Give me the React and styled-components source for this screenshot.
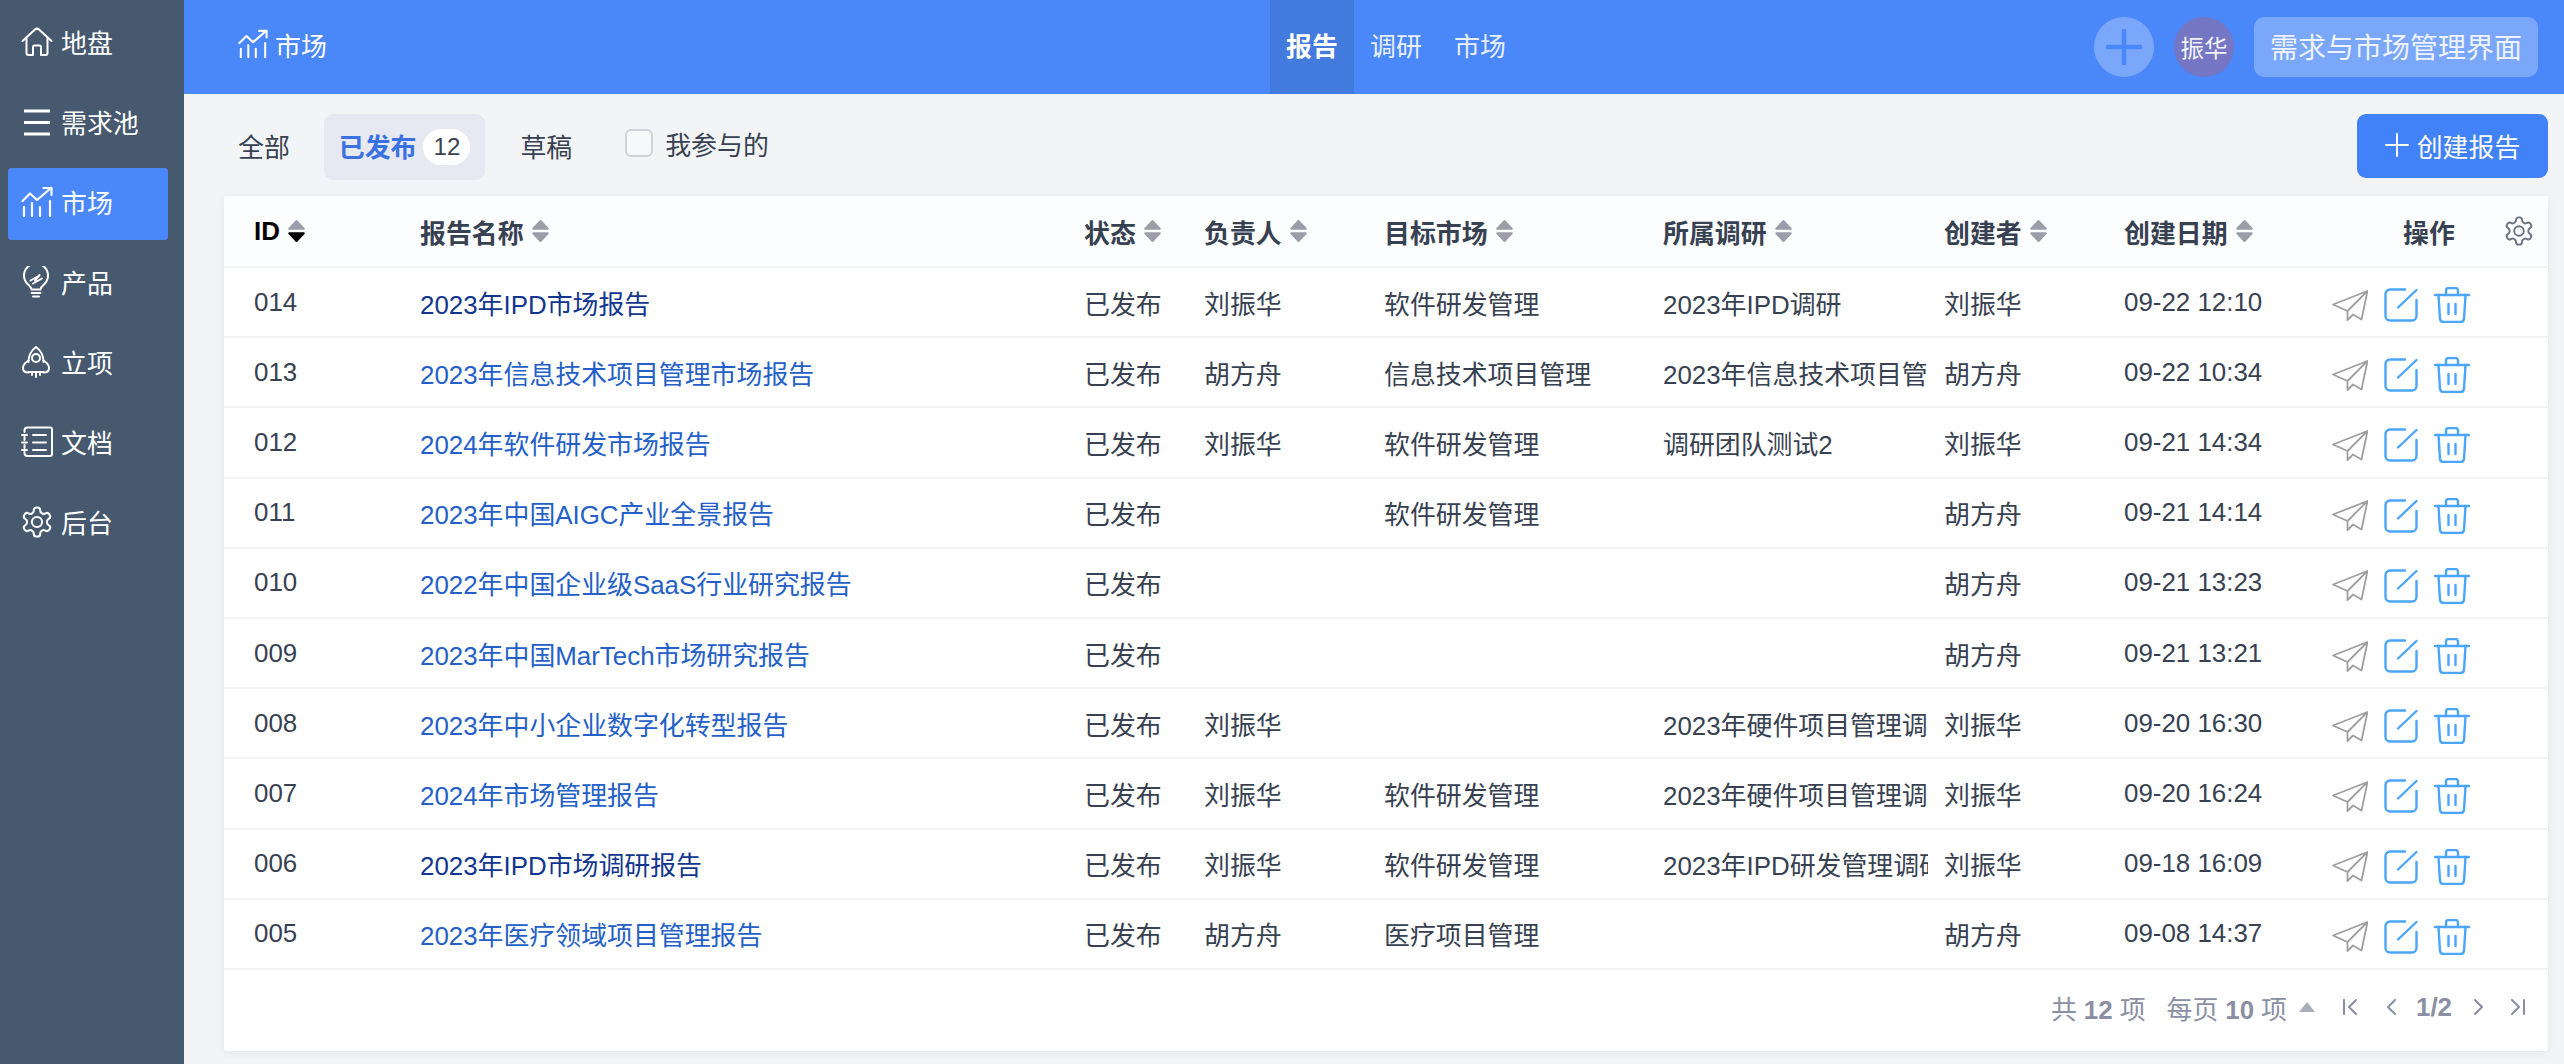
import React from "react";
import styled, { createGlobalStyle } from "styled-components";

const Global = createGlobalStyle`
  * { box-sizing: border-box; }
  html, body { margin: 0; padding: 0; height: 100%; background: #f3f4f6; }
  body { font-family: "Liberation Sans", "Noto Sans CJK SC", sans-serif; font-size: 25.9px; color: #374151; }
`;

const Shell = styled.div`display: flex; height: 1064px; overflow: hidden;`;
const Sidebar = styled.nav`
  width: 184px; flex: none; background: #46596f; padding: 8px 16px 0 8px;
  display: flex; flex-direction: column; gap: 8px;
`;
const NavItem = styled.div`
  height: 72px; display: flex; align-items: center; gap: 8px; padding: 0 0 6px 13px;
  border-radius: 4px; color: #fff; background: ${p => (p.$active ? "#4a87f9" : "transparent")};
  svg { width: 32px; height: 32px; flex: none; position: relative; top: 1px; }
`;
const Main = styled.div`flex: 1; min-width: 0; display: flex; flex-direction: column;`;
const TopBar = styled.header`height: 94px; flex: none; background: #4a87f9; display: flex; align-items: stretch; color: #fff;`;
const Title = styled.div`
  width: 1086px; flex: none; padding: 0 0 6px 54px; display: flex; align-items: center; gap: 7px;
  svg { width: 30px; height: 30px; }
`;
const TopNav = styled.div`display: flex; flex: 1;`;
const TopTab = styled.div`
  width: 84px; display: flex; align-items: center; justify-content: center; padding-bottom: 6px;
  background: ${p => (p.$active ? "#437add" : "transparent")};
  font-weight: ${p => (p.$active ? 700 : 400)};
  color: ${p => (p.$active ? "#fff" : "#e8effe")};
`;
const TopActions = styled.div`display: flex; align-items: center; gap: 20px; padding: 0 26px 0 0;`;
const RoundPlus = styled.div`
  width: 60px; height: 60px; border-radius: 50%; background: #7ba7fb; display: flex; align-items: center; justify-content: center;
  svg { width: 36px; height: 36px; }
`;
const Avatar = styled.div`
  width: 60px; height: 60px; border-radius: 50%; background: #7576c4; display: flex; align-items: center; justify-content: center;
  font-size: 23.500px; color: #f2f3fc;
`;
const WorkspaceButton = styled.div`
  width: 284px; height: 60px; border-radius: 10px; background: #7ba7fb; display: flex; align-items: center; justify-content: center;
  color: #eef3ff; font-size: 28px; padding-bottom: 2px;
`;
const Content = styled.main`flex: 1; padding: 20px 16px 13px 40px; display: flex; flex-direction: column; gap: 16px; min-height: 0;`;
const FilterBar = styled.div`display: flex; align-items: flex-start; height: 66px;`;
const Tab = styled.div`
  height: 66px; padding: 0 15px 4px; display: flex; align-items: center; gap: 7px; border-radius: 9px;
  margin-right: 20px; color: ${p => (p.$active ? "#3a72e3" : "#374151")};
  background: ${p => (p.$active ? "#e6e9f2" : "transparent")};
  font-weight: ${p => (p.$active ? 600 : 400)};
  &:first-child { margin-left: -1px; margin-right: 19px; }
`;
const Badge = styled.span`
  width: 47px; height: 36px; border-radius: 18px; background: #fff; color: #374151; font-size: 24px; font-weight: 400;
  display: flex; align-items: center; justify-content: center; position: relative; top: 2px;
`;
const Mine = styled.label`display: flex; align-items: center; gap: 12px; margin-left: 18px; height: 58px; color: #374151;`;
const Checkbox = styled.span`width: 28px; height: 28px; border: 2px solid #cfd2d8; border-radius: 6px; background: #f7f8f9;`;
const CreateButton = styled.button`
  margin-left: auto; width: 191px; height: 64px; border: 0; border-radius: 9px; background: #4282f8; color: #fff;
  font: inherit; display: flex; align-items: center; justify-content: center; gap: 8px; padding: 0 0 2px;
  svg { width: 24px; height: 24px; }
`;
const Card = styled.section`
  flex: 1; background: #fff; border-radius: 3px; box-shadow: 0 2px 8px rgba(30, 40, 70, 0.07);
  display: flex; flex-direction: column; min-height: 0;
`;
const COLS = "166px 664px 120px 180px 279px 281px 180px 208px 1fr";
const HeadRow = styled.div`
  height: 72px; flex: none; display: grid; grid-template-columns: ${COLS}; padding-left: 30px; align-items: center;
  background: #fcfdfe; border-bottom: 2px solid #f3f4f6; font-weight: 600;
`;
const HeadCell = styled.div`
  display: flex; align-items: center; gap: 8px; white-space: nowrap; color: ${p => (p.$dark ? "#000" : "#374151")};
  svg { width: 17px; height: 24px; flex: none; }
`;
const OpsHead = styled.div`
  display: flex; align-items: center; gap: 49px; padding-left: 71px; white-space: nowrap;
  svg { width: 30px; height: 30px; flex: none; color: #6b7280; }
`;
const Row = styled.div`
  height: 70.2px; flex: none; display: grid; grid-template-columns: ${COLS}; padding-left: 30px; align-items: center;
  border-bottom: 2px solid #f3f4f6;
`;
const Cell = styled.div`overflow: hidden; white-space: nowrap; margin-right: 16px;`;
const NameLink = styled.a`
  color: ${p => (p.$visited ? "#12368f" : "#2460c8")}; text-decoration: none; white-space: nowrap;
`;
const Ops = styled.div`
  display: flex; align-items: center; gap: 16px; position: relative; top: 3px;
`;
const Footer = styled.footer`
  flex: 1; display: flex; align-items: center; justify-content: flex-end; padding: 0 22px 6px 0; color: #8a8fa3;
`;
const PageText = styled.span`display: inline-flex; align-items: baseline; gap: 7px; margin-right: ${p => p.$mr || 0}px;`;
const Strong = styled.b`font-weight: 700;`;
const PagerBtn = styled.span`
  display: flex; align-items: center; justify-content: center; margin-left: ${p => p.$ml || 0}px;
  svg { display: block; }
`;

const Home = () => (
  <svg viewBox="0 0 32 32" fill="none" stroke="currentColor" strokeWidth="2" strokeLinejoin="round" strokeLinecap="round">
    <path d="M1.500 15 14 3.500a3 3 0 0 1 4 0L30.500 15" />
    <path d="M5.500 12.500V27a2 2 0 0 0 2 2H12v-8a1.500 1.500 0 0 1 1.500-1.500h5A1.500 1.500 0 0 1 20 21v8h4.500a2 2 0 0 0 2-2V12.500" />
  </svg>
);
const Menu = () => (
  <svg viewBox="0 0 32 32" fill="none" stroke="currentColor" strokeWidth="3">
    <path d="M3 5h26M3 16.500h26M3 28h26" />
  </svg>
);
const Chart = ({ w = 2.2 }) => (
  <svg viewBox="0 0 32 32" fill="none" stroke="currentColor" strokeWidth={w} strokeLinecap="round" strokeLinejoin="round">
    <path d="M1.500 15 9 7.500l7 6.500L30 2" />
    <path d="M22.500 2H30.500V9" />
    <path d="M3 21v9M11 17v13M19 21v9M29 15v15" />
  </svg>
);
const Bulb = () => (
  <svg viewBox="0 0 32 32" fill="none" stroke="currentColor" strokeWidth="2" strokeLinecap="round" strokeLinejoin="round">
    <path d="M10.500 23.500C10.500 21 8.500 20 6.500 18A12 12 0 1 1 23.500 18C21.500 20 19.500 21 19.500 23.500Z" />
    <path d="M9.500 14.500 18.500 9.500M12 17.500l9-5M18.500 9l-4.500 5.500" />
    <path d="M10.500 27h9M12 30.500h6" />
  </svg>
);
const Rocket = () => (
  <svg viewBox="0 0 32 32" fill="none" stroke="currentColor" strokeWidth="2" strokeLinecap="round" strokeLinejoin="round">
    <path d="M7.500 16C7.500 8 11.500 3.500 15 1c3.500 2.500 7.500 7 7.500 15" />
    <path d="M7.500 14.500C3.500 17 1.500 20 2 23c.5 3 4 4 6 3h14c2 1 5.500 0 6-3 .5-3-1.500-6-5.500-8.500" />
    <circle cx="15" cy="12" r="4" />
    <path d="M11 26v3M15 26v5M19 26v3" />
  </svg>
);
const Docs = () => (
  <svg viewBox="0 0 32 32" fill="none" stroke="currentColor" strokeWidth="2" strokeLinecap="round" strokeLinejoin="round">
    <path d="M3.500 6V4.500a3 3 0 0 1 3-3H29a2 2 0 0 1 2 2V28a2 2 0 0 1-2 2H6.500a3 3 0 0 1-3-3V26" />
    <path d="M3.500 11v3M3.500 19v3M1 9h5M1 16.500h5M1 24h5" />
    <path d="M12 9h13M12 16.500h13M12 24h13" />
  </svg>
);
const Gear = () => (
  <svg viewBox="1 1 22 22" fill="none" stroke="currentColor" strokeWidth="1.400" strokeLinecap="round" strokeLinejoin="round">
    <path d="M12.220 2h-.44a2 2 0 0 0-2 2v.18a2 2 0 0 1-1 1.730l-.43.250a2 2 0 0 1-2 0l-.15-.080a2 2 0 0 0-2.730.730l-.22.380a2 2 0 0 0 .730 2.730l.150.100a2 2 0 0 1 1 1.720v.510a2 2 0 0 1-1 1.740l-.150.090a2 2 0 0 0-.730 2.730l.220.380a2 2 0 0 0 2.730.730l.150-.080a2 2 0 0 1 2 0l.430.250a2 2 0 0 1 1 1.730V20a2 2 0 0 0 2 2h.44a2 2 0 0 0 2-2v-.18a2 2 0 0 1 1-1.730l.43-.250a2 2 0 0 1 2 0l.150.080a2 2 0 0 0 2.730-.730l.220-.390a2 2 0 0 0-.730-2.730l-.150-.080a2 2 0 0 1-1-1.740v-.500a2 2 0 0 1 1-1.740l.150-.090a2 2 0 0 0 .730-2.730l-.220-.380a2 2 0 0 0-2.730-.730l-.150.080a2 2 0 0 1-2 0l-.430-.250a2 2 0 0 1-1-1.730V4a2 2 0 0 0-2-2z" />
    <circle cx="12" cy="12" r="3.500" />
  </svg>
);
const Plus = ({ color = "currentColor", w = 3 }) => (
  <svg viewBox="0 0 24 24" fill="none" stroke={color} strokeWidth={w} strokeLinecap="round">
    <path d="M12 1v22M1 12h22" />
  </svg>
);
const Sort = ({ down }) => (
  <svg viewBox="0 0 17 24">
    <path d="M7.500 1.500a1.400 1.400 0 0 1 2 0L16.500 9a1 1 0 0 1-.7 1.700H1.200A1 1 0 0 1 .5 9z" fill="#9b9ea8" />
    <path d="M7.500 22.500a1.400 1.400 0 0 0 2 0L16.500 15a1 1 0 0 0-.7-1.700H1.200A1 1 0 0 0 .5 15z" fill={down ? "#000" : "#9b9ea8"} />
  </svg>
);
const Send = () => (
  <svg width="36" height="31" viewBox="0 0 36 31" fill="none" stroke="#9e9e9e" strokeWidth="1.800" strokeLinejoin="round">
    <path d="M35.500 1 1 14.500l14.500 6.500L35.500 1 29.500 29.500 21 24.500l-5.500 5.500v-9" />
  </svg>
);
const Edit = () => (
  <svg width="34" height="34" viewBox="0 0 34 34" fill="none" stroke="#4aa5fb" strokeWidth="2.400" strokeLinecap="round">
    <path d="M21 1.500H6a4.500 4.500 0 0 0-4.500 4.500v22A4.500 4.500 0 0 0 6 32.500h22a4.500 4.500 0 0 0 4.500-4.500V12" />
    <path d="M14 19.500 32.500 2" />
  </svg>
);
const Trash = () => (
  <svg width="36" height="36" viewBox="0 0 36 36" fill="none" stroke="#4aa5fb" strokeWidth="2.400" strokeLinecap="round" strokeLinejoin="round">
    <path d="M1 8h34" />
    <path d="M12 8V3.500A2.500 2.500 0 0 1 14.500 1h7A2.500 2.500 0 0 1 24 3.500V8" />
    <path d="M4.500 8l1.500 24a3.500 3.500 0 0 0 3.500 3h17a3.500 3.500 0 0 0 3.500-3L31.500 8" />
    <path d="M14.500 17v10M21.500 17v10" />
  </svg>
);
const Pager = ({ d, w = 16 }) => (
  <svg width={w} height="22" viewBox={`0 0 ${w} 22`} fill="none" stroke="#8a8fa3" strokeWidth="2.100" strokeLinecap="round" strokeLinejoin="round">
    <path d={d} />
  </svg>
);

const navItems = [
  ["地盘", Home], ["需求池", Menu], ["市场", Chart, true], ["产品", Bulb], ["立项", Rocket], ["文档", Docs], ["后台", Gear],
];
const heads = ["ID", "报告名称", "状态", "负责人", "目标市场", "所属调研", "创建者", "创建日期"];
const rows = [
  ["014", "2023年IPD市场报告", "已发布", "刘振华", "软件研发管理", "2023年IPD调研", "刘振华", "09-22 12:10", true],
  ["013", "2023年信息技术项目管理市场报告", "已发布", "胡方舟", "信息技术项目管理", "2023年信息技术项目管理调研", "胡方舟", "09-22 10:34"],
  ["012", "2024年软件研发市场报告", "已发布", "刘振华", "软件研发管理", "调研团队测试2", "刘振华", "09-21 14:34"],
  ["011", "2023年中国AIGC产业全景报告", "已发布", "", "软件研发管理", "", "胡方舟", "09-21 14:14"],
  ["010", "2022年中国企业级SaaS行业研究报告", "已发布", "", "", "", "胡方舟", "09-21 13:23"],
  ["009", "2023年中国MarTech市场研究报告", "已发布", "", "", "", "胡方舟", "09-21 13:21"],
  ["008", "2023年中小企业数字化转型报告", "已发布", "刘振华", "", "2023年硬件项目管理调研", "刘振华", "09-20 16:30"],
  ["007", "2024年市场管理报告", "已发布", "刘振华", "软件研发管理", "2023年硬件项目管理调研", "刘振华", "09-20 16:24"],
  ["006", "2023年IPD市场调研报告", "已发布", "刘振华", "软件研发管理", "2023年IPD研发管理调研", "刘振华", "09-18 16:09", true],
  ["005", "2023年医疗领域项目管理报告", "已发布", "胡方舟", "医疗项目管理", "", "胡方舟", "09-08 14:37"],
];

export default function App() {
  return (
    <Shell>
      <Global />
      <Sidebar>
        {navItems.map(([label, Icon, active]) => (
          <NavItem key={label} $active={active}><Icon />{label}</NavItem>
        ))}
      </Sidebar>
      <Main>
        <TopBar>
          <Title><Chart />市场</Title>
          <TopNav>
            <TopTab $active>报告</TopTab>
            <TopTab>调研</TopTab>
            <TopTab>市场</TopTab>
          </TopNav>
          <TopActions>
            <RoundPlus><Plus color="#4a87f9" /></RoundPlus>
            <Avatar>振华</Avatar>
            <WorkspaceButton>需求与市场管理界面</WorkspaceButton>
          </TopActions>
        </TopBar>
        <Content>
          <FilterBar>
            <Tab>全部</Tab>
            <Tab $active>已发布<Badge>12</Badge></Tab>
            <Tab>草稿</Tab>
            <Mine><Checkbox />我参与的</Mine>
            <CreateButton><Plus w={2} />创建报告</CreateButton>
          </FilterBar>
          <Card>
            <HeadRow>
              {heads.map((h, i) => (
                <HeadCell key={h} $dark={i === 0}>{h}<Sort down={i === 0} /></HeadCell>
              ))}
              <OpsHead>操作<Gear /></OpsHead>
            </HeadRow>
            {rows.map(r => (
              <Row key={r[0]}>
                <Cell>{r[0]}</Cell>
                <Cell><NameLink $visited={r[8]}>{r[1]}</NameLink></Cell>
                <Cell>{r[2]}</Cell>
                <Cell>{r[3]}</Cell>
                <Cell>{r[4]}</Cell>
                <Cell>{r[5]}</Cell>
                <Cell>{r[6]}</Cell>
                <Cell>{r[7]}</Cell>
                <Ops><Send /><Edit /><Trash /></Ops>
              </Row>
            ))}
            <Footer>
              <PageText $mr={21}>共 <Strong>12</Strong> 项</PageText>
              <PageText $mr={12}>每页 <Strong>10</Strong> 项</PageText>
              <svg width="16" height="10" viewBox="0 0 16 10"><path d="M8 0l8 10H0z" fill="#a9adbc" /></svg>
              <PagerBtn $ml={27}><Pager d="M2 4v14M14 4 7 11l7 7" /></PagerBtn>
              <PagerBtn $ml={28}><Pager w={11} d="M9 4 2 11l7 7" /></PagerBtn>
              <PagerBtn $ml={19}><Strong>1/2</Strong></PagerBtn>
              <PagerBtn $ml={21}><Pager w={11} d="M2 4l7 7-7 7" /></PagerBtn>
              <PagerBtn $ml={26}><Pager d="M2 4l7 7-7 7M14 4v14" /></PagerBtn>
            </Footer>
          </Card>
        </Content>
      </Main>
    </Shell>
  );
}
